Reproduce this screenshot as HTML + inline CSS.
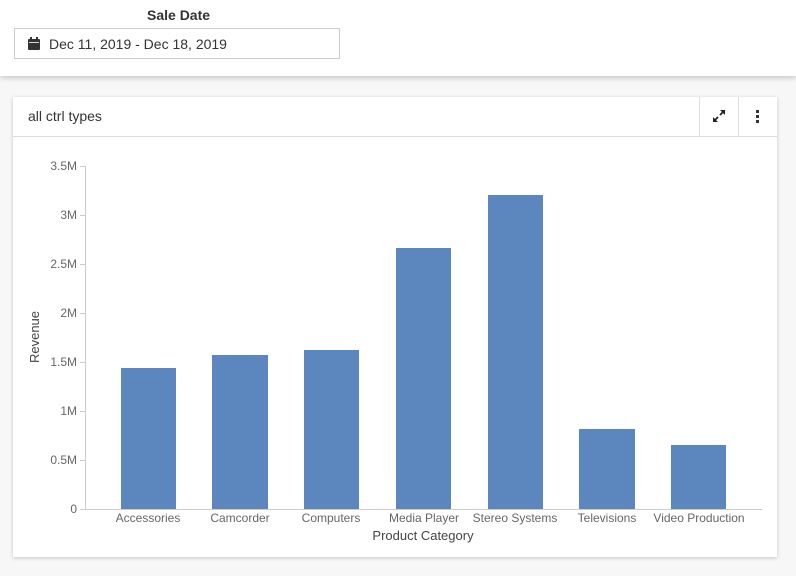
<!DOCTYPE html>
<html><head><style>
body{margin:0;width:796px;height:576px;background:#f7f7f7;font-family:"Liberation Sans",Arial,sans-serif;position:relative;overflow:hidden}
.top{position:absolute;left:0;top:0;width:796px;height:76px;background:#fff;box-shadow:0 2px 5px rgba(0,0,0,.2)}
.lbl{position:absolute;left:147px;top:7px;font-weight:bold;font-size:14px;color:#333}
.inp{position:absolute;left:14px;top:28px;width:326px;height:31px;border:1px solid #ccc;box-sizing:border-box}
.inp span{position:absolute;left:34px;top:7px;font-size:14px;color:#333}
.card{position:absolute;left:13px;top:97px;width:764px;height:460px;background:#fff;box-shadow:0 1px 4px rgba(0,0,0,.2)}
.hd{height:39px;border-bottom:1px solid #ddd;position:relative}
.hd .t{position:absolute;left:15px;top:11px;font-size:14px;color:#333}
.b1{position:absolute;left:686px;top:0;width:38px;height:39px;border-left:1px solid #ddd}
.b2{position:absolute;left:725px;top:0;width:38px;height:39px;border-left:1px solid #ddd}
</style></head><body>
<div class="top">
<div class="lbl">Sale Date</div>
<div class="inp"><svg style="position:absolute;left:13px;top:8px" width="12" height="13" viewBox="0 0 12 13"><rect x="0" y="2" width="12" height="11" rx="1" fill="#333"/><rect x="2" y="0" width="2" height="3" fill="#333"/><rect x="8" y="0" width="2" height="3" fill="#333"/><rect x="1" y="5" width="10" height="0.8" fill="#fff"/></svg><span>Dec 11, 2019 - Dec 18, 2019</span></div>
</div>
<div class="card">
<div class="hd"><div class="t">all ctrl types</div>
<div class="b1"><svg style="position:absolute;left:13px;top:13px" width="12" height="12" viewBox="0 0 12 12"><path d="M1.5 10.5L5 7M7 5L10.5 1.5" stroke="#222" stroke-width="1.8" fill="none"/><path d="M7 0h5v5zM0 7v5h5z" fill="#222"/></svg></div>
<div class="b2"><svg style="position:absolute;left:17px;top:13px" width="4" height="13"><rect x="0" y="0" width="3" height="3" fill="#333"/><rect x="0" y="5" width="3" height="3" fill="#333"/><rect x="0" y="10" width="3" height="3" fill="#333"/></svg></div>
</div>
</div>
<svg style="position:absolute;left:0;top:0" width="796" height="576" font-family="Liberation Sans, Arial, sans-serif">
<g font-size="12" fill="#666" text-anchor="end">
<text x="77" y="170">3.5M</text><text x="77" y="219">3M</text><text x="77" y="268">2.5M</text><text x="77" y="317">2M</text><text x="77" y="366">1.5M</text><text x="77" y="415">1M</text><text x="77" y="464">0.5M</text><text x="77" y="513">0</text>
</g>
<g stroke="#ccc"><line x1="85.5" y1="166" x2="85.5" y2="509"/><line x1="85" y1="509.5" x2="762" y2="509.5"/>
<line x1="80" y1="166.5" x2="85" y2="166.5"/><line x1="80" y1="215.5" x2="85" y2="215.5"/><line x1="80" y1="264.5" x2="85" y2="264.5"/><line x1="80" y1="313.5" x2="85" y2="313.5"/><line x1="80" y1="362.5" x2="85" y2="362.5"/><line x1="80" y1="411.5" x2="85" y2="411.5"/><line x1="80" y1="460.5" x2="85" y2="460.5"/><line x1="80" y1="509.5" x2="85" y2="509.5"/></g>
<g fill="#5b86be">
<rect x="121" y="368" width="55" height="141"/><rect x="212" y="355" width="56" height="154"/><rect x="304" y="350" width="55" height="159"/><rect x="396" y="248" width="55" height="261"/><rect x="488" y="195" width="55" height="314"/><rect x="579" y="429" width="56" height="80"/><rect x="671" y="445" width="55" height="64"/>
</g>
<g font-size="12" fill="#666" text-anchor="middle">
<text x="148" y="522">Accessories</text><text x="240" y="522">Camcorder</text><text x="331" y="522">Computers</text><text x="424" y="522">Media Player</text><text x="515" y="522">Stereo Systems</text><text x="607" y="522">Televisions</text><text x="699" y="522">Video Production</text>
</g>
<text x="423" y="540" font-size="13" fill="#444" text-anchor="middle">Product Category</text>
<text transform="translate(39,337) rotate(-90)" font-size="13" fill="#444" text-anchor="middle">Revenue</text>
</svg>
</body></html>
